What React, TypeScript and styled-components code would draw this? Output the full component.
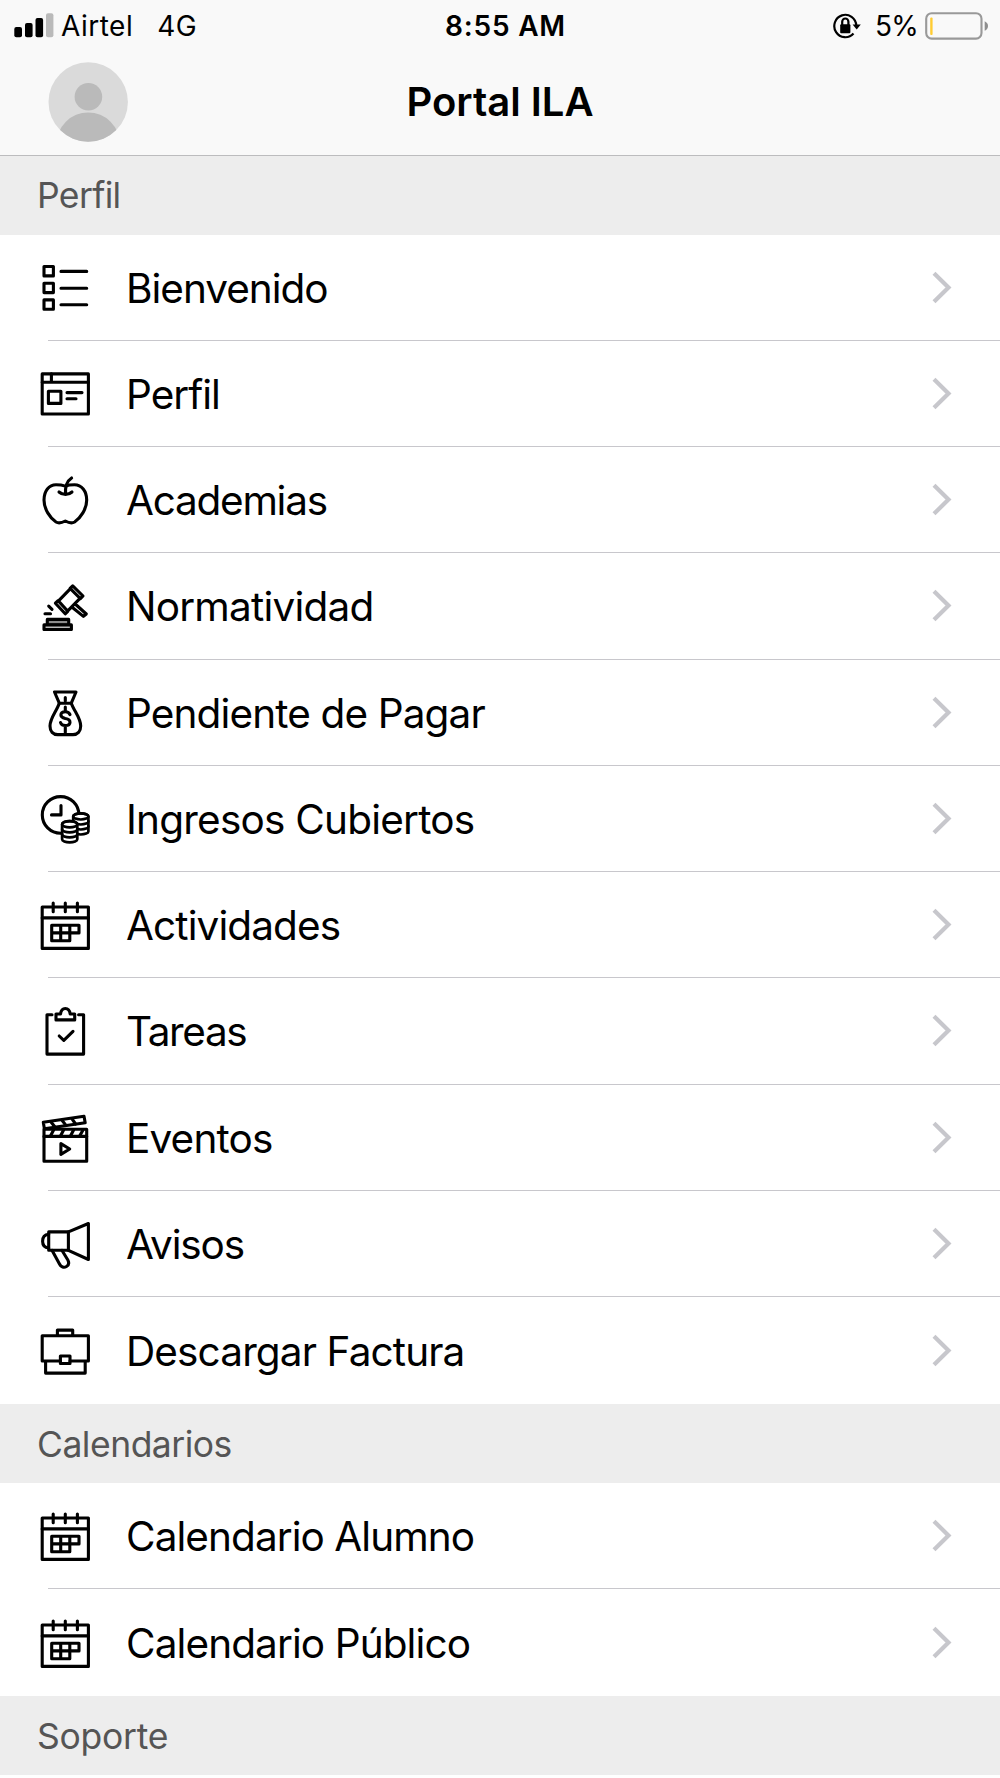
import React from "react";
import styled, { createGlobalStyle } from "styled-components";

const GlobalStyle = createGlobalStyle`
  *, *::before, *::after { box-sizing: border-box; }
  body {
    margin: 0;
    background: #fff;
    color: #000;
    font-family: Inter, "Liberation Sans", sans-serif;
    overflow: hidden;
  }
`;

const Screen = styled.div`
  width: 1000px;
  height: 1778px;
  overflow: hidden;
  background: #fff;
`;

const TopArea = styled.header`
  height: 155.5px;
  background: #f9f9f9;
  border-bottom: 1px solid #bcbcbe;
`;

const StatusBar = styled.div`
  display: grid;
  grid-template-columns: 1fr auto 1fr;
  align-items: center;
  height: 51px;
  padding: 0 11px 0 14px;
  font-size: 28px;
  line-height: 34px;
`;

const StatusGroup = styled.div<{ $end?: boolean }>`
  display: flex;
  align-items: center;
  justify-content: ${(p) => (p.$end ? "flex-end" : "flex-start")};
`;

const StatusText = styled.span<{ $ml?: number; $ls?: number }>`
  margin-left: ${(p) => p.$ml ?? 0}px;
  letter-spacing: ${(p) => p.$ls ?? 0}px;
  white-space: nowrap;
`;

const Clock = styled.span`
  font-weight: 600;
  letter-spacing: 0.8px;
  padding-left: 8px;
`;

const Drawing = styled.svg<{ $ml?: number }>`
  display: block;
  flex: none;
  margin-left: ${(p) => p.$ml ?? 0}px;
`;

const NavBar = styled.div`
  display: grid;
  grid-template-columns: 80px 1fr 80px;
  align-items: center;
  height: 102px;
  padding: 0 48px;
`;

const Title = styled.h1`
  margin: 0;
  text-align: center;
  font-size: 40px;
  font-weight: 600;
  line-height: 48px;
  letter-spacing: 0;
`;

const SectionTitle = styled.h2<{ $ls: number }>`
  display: flex;
  align-items: center;
  height: 79px;
  margin: 0;
  padding: 1px 0 0 37px;
  background: #ededed;
  color: #555;
  font-size: 35.5px;
  font-weight: 400;
  letter-spacing: ${(p) => p.$ls}px;
`;

const List = styled.ul`
  margin: 0;
  padding: 0;
  list-style: none;
`;

const Row = styled.li`
  display: flex;
  align-items: center;
  height: 106.25px;
  padding: 0 48px 0 40px;
  background: linear-gradient(#c8c7cc, #c8c7cc) 48px 100% / 100% 1px no-repeat;

  &:last-child {
    height: 107px;
    background: none;
  }
`;

const Label = styled.span<{ $ls: number }>`
  flex: 1;
  margin-left: 36px;
  padding-top: 2px;
  font-size: 40.5px;
  line-height: 50px;
  letter-spacing: ${(p) => p.$ls}px;
  white-space: nowrap;
`;

const CoinStack = ({ x, y, rx, ry, step, n }: { x: number; y: number; rx: number; ry: number; step: number; n: number }) => (
  <g strokeWidth={2.7}>
    <path
      fill="#fff"
      d={`M${x - rx} ${y}V${y + step * n}A${rx} ${ry} 0 0 0 ${x + rx} ${y + step * n}V${y}A${rx} ${ry} 0 0 0 ${x - rx} ${y}Z`}
    />
    <ellipse cx={x} cy={y} rx={rx} ry={ry} />
    {Array.from({ length: n - 1 }, (_, i) => y + step * (i + 1)).map((cy) => (
      <path key={cy} d={`M${x - rx} ${cy}A${rx} ${ry} 0 0 0 ${x + rx} ${cy}`} />
    ))}
  </g>
);

const icons: Record<string, React.ReactNode> = {
  list: (
    <>
      <rect x="4" y="3.5" width="9.4" height="9.4" />
      <rect x="4" y="20.2" width="9.4" height="9.4" />
      <rect x="4" y="36.9" width="9.4" height="9.4" />
      <path d="M21 8.4H46.7M21 25.2H46.7M21 41.8H46.7" />
    </>
  ),
  profile: (
    <>
      <rect x="2.2" y="4.9" width="46.2" height="40.1" />
      <path d="M2.2 13.3H48.4M11.4 4.9V13.3M27 23.6H42M27 29.7H36" />
      <rect x="8.4" y="22.2" width="12.5" height="12.2" />
    </>
  ),
  apple: (
    <>
      <path d="M25.3 11.1C22 10 18.5 9.8 16 9.8C9 9.8 4 16 4 25C4 34 10 43 16 47C18.5 48.5 21.5 48 25.3 46C29 48 32 48.5 34.6 47C40.5 43 46.7 34 46.7 25C46.7 16 41.5 9.8 34.5 9.8C32 9.8 28.5 10 25.3 11.1Z" />
      <path d="M25.5 19.5C25 12 27 6 31.6 3M19 17C22.5 20.2 28.5 20.2 32 17" />
    </>
  ),
  gavel: (
    <>
      <rect x="7.3" y="38.4" width="21.4" height="5.7" fill="#8c8c8c" />
      <rect x="4" y="43.9" width="27.4" height="4.6" fill="#bbb" />
      <path d="M32.7 4.8L43 15L40.4 17.6L30.1 7.4ZM15.4 22.2L18.1 19.6L27.8 30.3L25.2 32.8ZM18.8 19.6L30.2 7.9M28 29.6L40 17.4M35.2 23L46.3 33L43.4 35.4L31.8 26M5 32.7H10.5M8.7 25.2L12 28.4" />
    </>
  ),
  bag: (
    <>
      <path d="M14.5 4H36L31.3 15.2H19.3Z" />
      <path d="M31.3 15.2C34 23 40.7 30 40.7 38C40.7 43.5 37.5 46.6 33 46.6H17.7C13 46.6 10 43.5 10 38C10 30 16.7 23 19.3 15.2" />
      <path d="M25.3 9.6V13M25.3 19V23M25.3 38V44.5M30 26.6C29.2 24.4 27.5 23.7 25.3 23.7C22.6 23.7 20.9 25 20.9 27.1C20.9 29.5 23 30 25.3 30.5C28 31 30 32 30 34.2C30 36.3 28 37.5 25.3 37.5C22.5 37.5 21 36.7 20.5 34.5" />
    </>
  ),
  income: (
    <>
      <circle cx="20.6" cy="20.9" r="18.3" />
      <path d="M21 11.5V20.9H11.5" />
      <CoinStack x={40.8} y={22.4} rx={7.6} ry={3.1} step={5} n={3} />
      <CoinStack x={29.7} y={30.2} rx={7.6} ry={3.1} step={5} n={3} />
    </>
  ),
  calendar: (
    <>
      <rect x="2.2" y="7" width="46.2" height="41.4" />
      <path d="M2.2 17.9H48.4M13.2 3V11.8M25.3 3V11.8M37.4 3V11.8" />
      <path d="M11.7 25.3H39V32.9H11.7ZM11.7 25.3V40.7H29.8V25.3M20.7 25.3V40.7" />
    </>
  ),
  clipboard: (
    <>
      <path d="M12 8.8H7V48.1H43.6V8.8H38.6" />
      <path d="M16 13.9V8H20.5C21 4.5 22.5 2.5 25.3 2.5S29.7 4.5 30.2 8H34.7V13.9Z" />
      <path d="M19.2 30L23.8 34.4L33 25.4" />
    </>
  ),
  clapper: (
    <>
      <rect x="4" y="16.3" width="42.7" height="31.9" />
      <path d="M4 23.4H46.7M3.3 9.2L44 3.2L45.2 9.8L4.4 15.8Z" />
      <path d="M11 9L15 14M22 7.2L26 12.4M32 5.8L35.6 11M13.6 17L10.6 22.8M23.6 17L20.6 22.8M33.6 17L30.6 22.8M43 17L39.8 22.8" />
      <path d="M20.9 30.6L29.7 36L20.9 41.4Z" />
    </>
  ),
  megaphone: (
    <>
      <rect x="8.7" y="12.9" width="19.7" height="18.4" />
      <path d="M28.4 12.9L48.4 4.5V40.5L28.4 31.3M8.7 15.2C4.5 15.6 2.6 18.5 2.6 22.2S4.5 28.6 8.7 29M12 31.3L19.5 45C21 48.2 24 49 26.5 47.5S29 43.5 28 41.3L21.9 31.3" />
    </>
  ),
  briefcase: (
    <>
      <path d="M17.4 9.7V4.1H32.7V9.7M20.4 35H2.2V9.7H48.4V35H30M5.6 35V47.1H45.2V35" />
      <rect x="20.4" y="30" width="9.6" height="7.5" />
    </>
  ),
};

type Item = { icon: string; label: string; ls: number };

const profileItems: Item[] = [
  { icon: "list", label: "Bienvenido", ls: -1 },
  { icon: "profile", label: "Perfil", ls: -1 },
  { icon: "apple", label: "Academias", ls: -1.25 },
  { icon: "gavel", label: "Normatividad", ls: -0.77 },
  { icon: "bag", label: "Pendiente de Pagar", ls: -0.87 },
  { icon: "income", label: "Ingresos Cubiertos", ls: -0.78 },
  { icon: "calendar", label: "Actividades", ls: -0.9 },
  { icon: "clipboard", label: "Tareas", ls: -1.4 },
  { icon: "clapper", label: "Eventos", ls: -0.85 },
  { icon: "megaphone", label: "Avisos", ls: -1.15 },
  { icon: "briefcase", label: "Descargar Factura", ls: -0.87 },
];

const calendarItems: Item[] = [
  { icon: "calendar", label: "Calendario Alumno", ls: -0.93 },
  { icon: "calendar", label: "Calendario Público", ls: -0.9 },
];

const MenuList = ({ items }: { items: Item[] }) => (
  <List>
    {items.map(({ icon, label, ls }) => (
      <Row key={label}>
        <Drawing width="50" height="50" viewBox="0 0 50 50" fill="none" stroke="#000" strokeWidth="3.1" strokeLinecap="round" strokeLinejoin="round">
          {icons[icon]}
        </Drawing>
        <Label $ls={ls}>{label}</Label>
        <Drawing width="20" height="34" viewBox="0 0 20 34" fill="none" stroke="#c7c7cc" strokeWidth="4.2">
          <path d="M2 2.2L16.5 16.5L2 30.8" />
        </Drawing>
      </Row>
    ))}
  </List>
);

export default function App() {
  return (
    <Screen>
      <GlobalStyle />
      <TopArea>
        <StatusBar>
          <StatusGroup>
            <Drawing width="40" height="26" viewBox="0 0 40 26">
              <rect x="0.3" y="14" width="7.7" height="10.3" rx="2" />
              <rect x="11" y="10" width="7.6" height="14.3" rx="2" />
              <rect x="21.5" y="5" width="7.6" height="19.3" rx="2" />
              <rect x="32" y="0.2" width="7.4" height="24.1" rx="2" fill="#bababa" />
            </Drawing>
            <StatusText $ml={7} $ls={0.5}>Airtel</StatusText>
            <StatusText $ml={24} $ls={0.5}>4G</StatusText>
          </StatusGroup>
          <Clock>8:55 AM</Clock>
          <StatusGroup $end>
            <Drawing width="28" height="26" viewBox="0 0 28 26" fill="none" stroke="#000" strokeWidth="2.2">
              <path d="M23.3 12.5A11 11.2 0 1 0 20.5 20.5" />
              <path d="M19.6 11.4H27.8L23.7 16.4Z" fill="#000" stroke="none" />
              <rect x="7.2" y="11.2" width="10.2" height="9" rx="1" fill="#000" stroke="none" />
              <path d="M9.2 12V8.8A3.1 3.3 0 0 1 15.4 8.8V12" />
            </Drawing>
            <StatusText $ml={14} $ls={-0.7}>5%</StatusText>
            <Drawing $ml={7} width="64" height="28" viewBox="0 0 64 28">
              <rect x="1.2" y="1.2" width="55.3" height="25.4" rx="5.5" fill="none" stroke="#999" strokeWidth="2.1" />
              <rect x="5.2" y="5.5" width="2.4" height="17.5" rx="1" fill="#fc3" />
              <path d="M59.7 9.2Q63 10.8 63 14T59.7 18.8Z" fill="#8e8e8e" />
            </Drawing>
          </StatusGroup>
        </StatusBar>
        <NavBar>
          <Drawing width="80" height="80" viewBox="0 0 80 80">
            <clipPath id="avatar-clip">
              <circle cx="40.2" cy="40" r="39.7" />
            </clipPath>
            <g clipPath="url(#avatar-clip)">
              <rect width="80" height="80" fill="#dadada" />
              <circle cx="40.4" cy="34.7" r="13.8" fill="#bababa" />
              <circle cx="40.2" cy="82" r="31.6" fill="#bababa" />
            </g>
          </Drawing>
          <Title>Portal ILA</Title>
        </NavBar>
      </TopArea>
      <main>
        <SectionTitle $ls={-0.65}>Perfil</SectionTitle>
        <MenuList items={profileItems} />
        <SectionTitle $ls={-0.5}>Calendarios</SectionTitle>
        <MenuList items={calendarItems} />
        <SectionTitle $ls={-0.25}>Soporte</SectionTitle>
      </main>
    </Screen>
  );
}
